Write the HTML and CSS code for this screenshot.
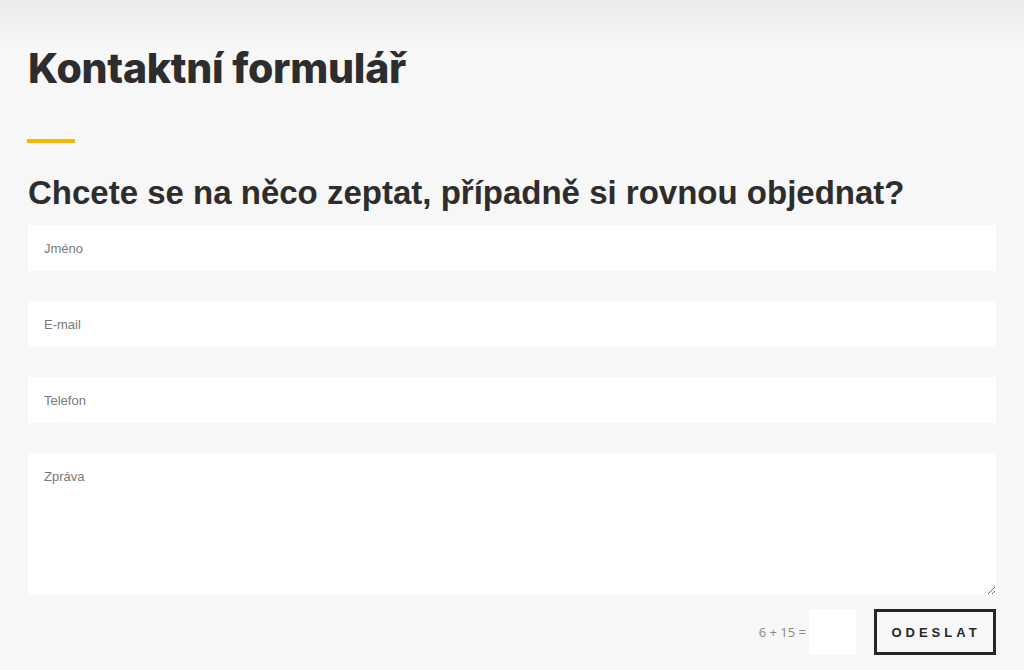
FILE: index.html
```html
<!DOCTYPE html>
<html>
<head>
    <title>Kontaktní formulář</title>
    <link rel="stylesheet" href="styles.css">
</head>
<body>
    <div class="top-shade"></div>
    <div class="page">
        <h1 class="title">Kontaktní formulář</h1>
        <div class="accent"></div>
        <h2 class="subtitle">Chcete se na něco zeptat, případně si rovnou objednat?</h2>

        <form class="contact-form" onsubmit="return false">
            <input type="text" class="field" placeholder="Jméno">
            <input type="email" class="field" placeholder="E-mail">
            <input type="text" class="field" placeholder="Telefon">
            <textarea class="field message" placeholder="Zpráva"></textarea>

            <div class="form-footer">
                <label class="captcha">6 + 15 = <input type="text" class="captcha-input"></label>
                <button type="submit" class="send">ODESLAT</button>
            </div>
        </form>
    </div>
</body>
</html>
```

FILE: styles.css
```css
html, body {
    margin: 0;
    padding: 0;
}

body {
    background-color: #f7f7f7;
    font-family: "Liberation Sans", Arial, sans-serif;
    color: #2b2b2b;
    position: relative;
}

.top-shade {
    position: absolute;
    top: 0;
    left: 0;
    right: 0;
    height: 44px;
    background: linear-gradient(#ebebeb, #f7f7f7);
}

.page {
    position: relative;
    padding: 44px 28px 0 28px;
}

.title {
    margin: 0;
    font-family: Inter, "Noto Sans", sans-serif;
    font-weight: 800;
    font-size: 41px;
    line-height: 48px;
    letter-spacing: -0.25px;
    color: #2d2d2d;
}

.accent {
    width: 48px;
    height: 4px;
    margin: 47px 0 0 -1px;
    background-color: #f6b800;
}

.subtitle {
    margin: 30px 0 0 0;
    font-size: 33px;
    line-height: 40px;
    font-weight: 700;
    color: #2d2d2d;
}

.contact-form {
    display: flex;
    flex-direction: column;
    gap: 30px;
    margin-top: 12px;
}

.field {
    display: block;
    box-sizing: border-box;
    width: 968px;
    height: 46px;
    padding: 0 16px;
    border: none;
    background-color: #ffffff;
    font-family: "Liberation Sans", Arial, sans-serif;
    font-size: 13px;
    color: #333;
    outline: none;
}

.field::placeholder {
    color: #777;
}

.message {
    height: 142px;
    padding: 16px;
    resize: vertical;
}

.form-footer {
    display: flex;
    justify-content: flex-end;
    align-items: center;
    gap: 18px;
    margin-top: -16px;
    width: 968px;
}

.captcha {
    display: flex;
    align-items: center;
    gap: 3px;
    font-family: "Open Sans", sans-serif;
    font-size: 13px;
    color: #888;
}

.captcha-input {
    box-sizing: border-box;
    width: 47px;
    height: 46px;
    border: none;
    background-color: #fff;
    outline: none;
}

.send {
    box-sizing: border-box;
    width: 122px;
    height: 46px;
    border: 3px solid #262626;
    background: transparent;
    font-family: "Liberation Sans", Arial, sans-serif;
    font-weight: 700;
    font-size: 13px;
    letter-spacing: 4px;
    padding-left: 8px;
    color: #262626;
    cursor: pointer;
}
```
